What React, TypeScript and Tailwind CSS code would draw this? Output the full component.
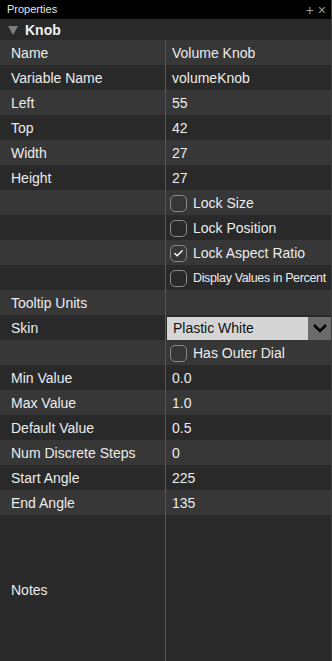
import { Check } from 'lucide-react';

type Row =
  | { kind: 'text'; label: string; value?: string }
  | { kind: 'check'; label: string; checked?: boolean; small?: boolean }
  | { kind: 'select'; label: string; value: string };

const rows: Row[] = [
  { kind: 'text', label: 'Name', value: 'Volume Knob' },
  { kind: 'text', label: 'Variable Name', value: 'volumeKnob' },
  { kind: 'text', label: 'Left', value: '55' },
  { kind: 'text', label: 'Top', value: '42' },
  { kind: 'text', label: 'Width', value: '27' },
  { kind: 'text', label: 'Height', value: '27' },
  { kind: 'check', label: 'Lock Size' },
  { kind: 'check', label: 'Lock Position' },
  { kind: 'check', label: 'Lock Aspect Ratio', checked: true },
  { kind: 'check', label: 'Display Values in Percent', small: true },
  { kind: 'text', label: 'Tooltip Units' },
  { kind: 'select', label: 'Skin', value: 'Plastic White' },
  { kind: 'check', label: 'Has Outer Dial' },
  { kind: 'text', label: 'Min Value', value: '0.0' },
  { kind: 'text', label: 'Max Value', value: '1.0' },
  { kind: 'text', label: 'Default Value', value: '0.5' },
  { kind: 'text', label: 'Num Discrete Steps', value: '0' },
  { kind: 'text', label: 'Start Angle', value: '225' },
  { kind: 'text', label: 'End Angle', value: '135' },
];

function Checkbox({ checked }: { checked?: boolean }) {
  return (
    <span className="w-[17px] h-[17px] rounded-[5px] border border-[#8a8a8a] flex items-center justify-center shrink-0">
      {checked && <Check size={11} strokeWidth={3} className="text-white" />}
    </span>
  );
}

function PropRow({ row, index }: { row: Row; index: number }) {
  const bg = index % 2 === 0 ? 'bg-[#373737]' : 'bg-[#292929]';
  const isCheck = row.kind === 'check';
  return (
    <div className={`flex h-[25px] ${bg}`}>
      <div className="w-[165px] shrink-0 pl-[11px] pt-px flex items-center">
        {!isCheck && row.label}
      </div>
      <div className="w-px bg-[#575757] shrink-0" />
      <div className="flex-1 min-w-0 flex items-center pt-px">
        {row.kind === 'text' && <span className="pl-[6px]">{row.value}</span>}
        {row.kind === 'check' && (
          <div className="flex items-center gap-[6px] pl-[4px]">
            <Checkbox checked={row.checked} />
            <span className={row.small ? 'text-[12.5px] tracking-[-0.35px] whitespace-nowrap' : ''}>{row.label}</span>
          </div>
        )}
        {row.kind === 'select' && (
          <div className="flex h-[23px] w-full ml-px">
            <div className="flex-1 bg-[#d5d5d5] text-[#111] pl-[6px] flex items-center">{row.value}</div>
            <div className="w-[23px] bg-[#6b6b6b] flex items-center justify-center">
              <svg width="16" height="10" viewBox="0 0 16 10">
                <path d="M2 2 L8 8 L14 2" fill="none" stroke="#000" strokeWidth="2.6" />
              </svg>
            </div>
          </div>
        )}
      </div>
    </div>
  );
}

export default function App() {
  return (
    <div
      className="w-[332px] h-[661px] flex flex-col bg-[#292929] text-[#ececec] text-[14px] overflow-hidden border-r border-[#3d3d3d]"
      style={{ fontFamily: '"Liberation Sans", Arial, sans-serif' }}
    >
      <div className="h-[19px] bg-black flex items-center justify-between pl-[7px] pr-[5px] shrink-0">
        <span className="text-[11px] text-[#e6e6e6]">Properties</span>
        <span className="text-[#9a9a9a] text-[14px] leading-none flex gap-[4px]">
          <span>+</span>
          <span>×</span>
        </span>
      </div>
      <div className="h-[21px] flex items-center gap-[7px] pl-[8px] pt-[2px] bg-[#292929] shrink-0">
        <svg width="10" height="9" viewBox="0 0 10 9">
          <path d="M0 0 L10 0 L5 9 Z" fill="#7e7e7e" />
        </svg>
        <span className="font-bold text-[14px] text-[#f0f0f0]">Knob</span>
      </div>
      {rows.map((row, i) => (
        <PropRow key={row.label} row={row} index={i} />
      ))}
      <div className="flex flex-1">
        <div className="w-[165px] shrink-0 pl-[11px] pt-[4px] flex items-center">Notes</div>
        <div className="w-px bg-[#575757] shrink-0" />
        <div className="flex-1" />
      </div>
    </div>
  );
}
